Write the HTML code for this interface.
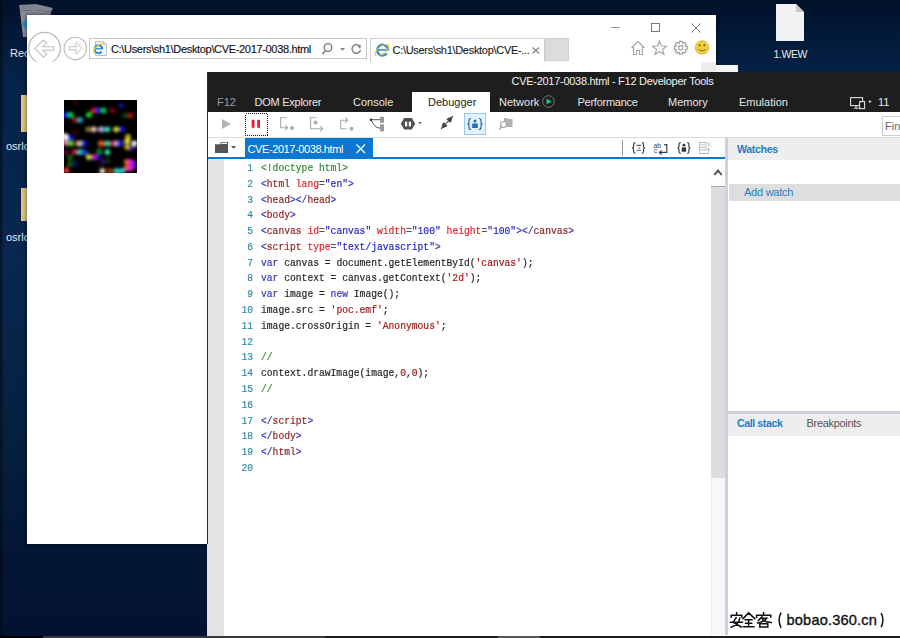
<!DOCTYPE html>
<html><head><meta charset="utf-8">
<style>
*{margin:0;padding:0;box-sizing:border-box}
html,body{width:900px;height:638px;overflow:hidden}
body{position:relative;background:#04163a;font-family:"Liberation Sans",sans-serif;font-size:11px;color:#000}
.a{position:absolute}
.t{position:absolute;white-space:nowrap;line-height:1}
#desk{left:0;top:0;width:900px;height:638px;background:linear-gradient(90deg,rgba(0,0,0,0.5) 0px,rgba(0,0,0,0) 4px),linear-gradient(180deg,#01112a 0px,#052247 72px,#092750 260px,#06213f 430px,#031634 560px,#021331 638px)}
.code{position:absolute;font-family:"Liberation Mono",monospace;font-size:10.6px;line-height:15.78px;white-space:pre;color:#262626;transform:scaleX(0.912);transform-origin:0 0;-webkit-text-stroke:0.2px currentColor}
.ln{position:absolute;font-family:"Liberation Mono",monospace;font-size:10.6px;line-height:15.78px;white-space:pre;color:#3089a8;text-align:right;width:44px;transform:scaleX(0.912);transform-origin:100% 0;-webkit-text-stroke:0.2px currentColor}
.tg{color:#3434b4}.tn{color:#8a1c1c}.at{color:#e0222c}.av{color:#2424c4}.kw{color:#3434c0}.st{color:#a31818}.cm{color:#2e8b2e}.dt{color:#2e8b2e}.eq{color:#555}
.tab{position:absolute;top:92px;height:20px;color:#e6e6e6;font-size:11px;line-height:20px;white-space:nowrap}
</style></head><body>
<div id="desk" class="a"></div>

<!-- desktop icons -->
<svg class="a" style="left:14px;top:3px" width="42" height="36" viewBox="0 0 42 36">
<path d="M5 2 L22 1 L39 5 L37 9 L21 7 L6 8 Z" fill="#80868f"/>
<path d="M6 8 L21 7 L37 9 L34 34 L9 34 Z" fill="#9ea3ad" opacity="0.85"/>
<circle cx="13.5" cy="21" r="4.6" fill="#2a8ad6"/>
</svg>
<div class="t" style="left:10px;top:48px;color:#e8e8e8;font-size:11px">Recy</div>
<div class="a" style="left:21px;top:95px;width:10px;height:37px;background:#e0c97e"></div>
<div class="t" style="left:6px;top:141px;color:#e8e8e8;font-size:11px">osrlc</div>
<div class="a" style="left:21px;top:188px;width:10px;height:33px;background:#e0c97e"></div>
<div class="t" style="left:6px;top:232px;color:#e8e8e8;font-size:11px">osrlc</div>
<svg class="a" style="left:776px;top:4px" width="28" height="38" viewBox="0 0 28 38">
<path d="M0 0 H20 L28 8 V37 H0 Z" fill="#f2f2f4"/>
<path d="M20 0 V8 H28 Z" fill="#c8c8cc"/>
</svg>
<div class="t" style="left:773.5px;top:48.5px;color:#e8e8e8;font-size:10.5px;letter-spacing:-0.4px">1.WEW</div>

<!-- browser window -->
<div class="a" style="left:27px;top:15px;width:689px;height:529px;background:#fff;box-shadow:0 0 4px 1px rgba(0,0,0,0.45)"></div>
<!-- back / forward -->
<svg class="a" style="left:27px;top:30px" width="62" height="34" viewBox="27 30 62 34">
<circle cx="44.55" cy="48.15" r="15.8" fill="none" stroke="#b8b8b8" stroke-width="1.2"/>
<rect x="27" y="61.6" width="40" height="3" fill="#fff"/>
<path d="M34.8 48.4 L43.6 40.1 L46.8 43.3 L42.9 46.7 H53.6 V50.3 H42.9 L46.8 53.8 L43.6 57.1 Z" fill="none" stroke="#c0c0c0" stroke-width="1.1" stroke-linejoin="miter"/>
<circle cx="75.3" cy="48.4" r="11.2" fill="none" stroke="#b8b8b8" stroke-width="1.1"/>
<path d="M82 48.3 L76.4 42.6 L74.8 44.3 L77 46.7 H69.2 V49.8 H77 L74.8 52.3 L76.4 54.1 Z" fill="none" stroke="#c0c0c0" stroke-width="1"/>
</svg>
<!-- address bar -->
<div class="a" style="left:89px;top:38px;width:278px;height:21px;border:1px solid #c8c8c8;background:#fff"></div>
<svg class="a" style="left:90px;top:39px" width="20" height="19" viewBox="90 39 20 19">
<path d="M95.5 41.5 H103.5 L106.5 44.5 V55.5 H95.5 Z" fill="#f6f6f6" stroke="#b8b8b8" stroke-width="0.9"/>
<path d="M103.5 41.5 V44.5 H106.5" fill="#ddd" stroke="#b8b8b8" stroke-width="0.7"/>
<path d="M102.4 49.3 A3.9 3.9 0 1 0 101.6 51.6" fill="none" stroke="#2a86d0" stroke-width="1.9"/>
<path d="M95 48.8 H102.6" stroke="#2a86d0" stroke-width="1.3"/>
<path d="M93.6 53.5 Q93.5 46 103 43.3" fill="none" stroke="#e8c830" stroke-width="1.2"/>
</svg>
<div class="t" style="left:111px;top:44px;font-size:11px;color:#111;letter-spacing:-0.33px;-webkit-text-stroke:0.15px #111">C:\Users\sh1\Desktop\CVE-2017-0038.html</div>
<svg class="a" style="left:320px;top:42px" width="45" height="14" viewBox="0 0 45 14">
<circle cx="8" cy="5.5" r="3.8" fill="none" stroke="#777" stroke-width="1.3"/>
<path d="M5.5 8.5 L2.5 12" stroke="#777" stroke-width="1.5"/>
<path d="M20 6 L25 6 L22.5 9 Z" fill="#888"/>
<path d="M39.5 4 A4.3 4.3 0 1 0 40.5 8" fill="none" stroke="#777" stroke-width="1.3"/>
<path d="M37 2.5 L41 3.5 L40 7 Z" fill="#777"/>
</svg>
<!-- tab -->
<div class="a" style="left:370px;top:38px;width:175px;height:24px;border:1px solid #d0d0d0;border-bottom:none;background:#fff"></div>
<svg class="a" style="left:373px;top:41px" width="18" height="18" viewBox="373 41 18 18">
<path d="M388 50.6 A5.4 5.4 0 1 0 386.8 53.6" fill="none" stroke="#2f8fd8" stroke-width="2.4"/>
<path d="M377.5 49.9 H388" stroke="#2f8fd8" stroke-width="1.6"/>
<ellipse cx="382" cy="50" rx="8.2" ry="3.6" transform="rotate(-38 382 50)" fill="none" stroke="#f0c830" stroke-width="1.1" stroke-dasharray="14 4 30 2"/>
</svg>
<div class="t" style="left:392.5px;top:45px;font-size:11px;color:#1a1a1a;letter-spacing:-0.3px;-webkit-text-stroke:0.12px #1a1a1a">C:\Users\sh1\Desktop\CVE-...</div>
<svg class="a" style="left:532px;top:47px" width="8" height="7" viewBox="0 0 8 7"><path d="M0.5 0.5 L7 6.5 M7 0.5 L0.5 6.5" stroke="#888" stroke-width="1.3"/></svg>
<div class="a" style="left:545px;top:38px;width:24px;height:23px;background:#dcdcdc;border:1px solid #cfcfcf"></div>
<!-- title buttons -->
<div class="a" style="left:611px;top:27px;width:9px;height:1px;background:#999"></div>
<div class="a" style="left:651px;top:23px;width:9px;height:9px;border:1px solid #777"></div>
<svg class="a" style="left:691px;top:23px" width="10" height="10" viewBox="0 0 10 10"><path d="M0.5 0.5 L9.5 9.5 M9.5 0.5 L0.5 9.5" stroke="#777" stroke-width="1"/></svg>
<!-- home star gear smiley -->
<svg class="a" style="left:630px;top:40px" width="82" height="16" viewBox="630 40 82 16">
<path d="M631.5 48 L638 41.5 L644.5 48 M633.5 46.5 V54.5 H636.5 V50.5 H639.5 V54.5 H642.5 V46.5" fill="none" stroke="#a4a4a4" stroke-width="1.1"/>
<path d="M659.5 41 L661.3 46 L666.5 46.3 L662.5 49.5 L664 54.5 L659.5 51.5 L655 54.5 L656.5 49.5 L652.5 46.3 L657.7 46 Z" fill="none" stroke="#a4a4a4" stroke-width="1.1"/>
<path d="M685.49 46.38 L687.25 46.39 L687.25 49.21 L685.49 49.22 L685.12 50.11 L686.36 51.36 L684.36 53.36 L683.11 52.12 L682.22 52.49 L682.21 54.25 L679.39 54.25 L679.38 52.49 L678.49 52.12 L677.24 53.36 L675.24 51.36 L676.48 50.11 L676.11 49.22 L674.35 49.21 L674.35 46.39 L676.11 46.38 L676.48 45.49 L675.24 44.24 L677.24 42.24 L678.49 43.48 L679.38 43.11 L679.39 41.35 L682.21 41.35 L682.22 43.11 L683.11 43.48 L684.36 42.24 L686.36 44.24 L685.12 45.49 Z" fill="none" stroke="#999" stroke-width="1.05" stroke-linejoin="round"/>
<circle cx="680.8" cy="47.8" r="2.2" fill="none" stroke="#999" stroke-width="1.05"/>
<circle cx="702" cy="47.5" r="6.8" fill="#f2cf3a" stroke="#c8a020" stroke-width="0.6"/>
<circle cx="699.6" cy="45.3" r="1" fill="#5a4a08"/><circle cx="704.4" cy="45.3" r="1" fill="#5a4a08"/>
<path d="M698.5 49.5 Q702 52.5 705.5 49.5" fill="none" stroke="#6a5a10" stroke-width="0.9"/>
</svg>
<div class="a" style="left:701px;top:62px;width:15px;height:10px;background:#ececec"></div>
<div class="a" style="left:716px;top:65px;width:22px;height:7px;background:#f4f4f4"></div>

<!-- canvas image -->
<svg class="a" style="left:64px;top:100px" width="73" height="73" viewBox="64 100 73 73"><defs><filter id="bl" x="-50%" y="-50%" width="200%" height="200%"><feGaussianBlur stdDeviation="1.4"/></filter></defs><rect x="64" y="100" width="73" height="73" fill="#000"/><g filter="url(#bl)"><circle cx="65.8" cy="114.9" r="2.9" fill="#1020ff" opacity="1.00"/><circle cx="70.8" cy="114.9" r="2.9" fill="#10d020" opacity="1.00"/><circle cx="75.0" cy="119.9" r="2.9" fill="#a01010" opacity="0.80"/><circle cx="80.0" cy="119.9" r="2.9" fill="#20a0c0" opacity="1.00"/><circle cx="88.9" cy="114.9" r="2.9" fill="#10d020" opacity="1.00"/><circle cx="93.9" cy="110.5" r="2.9" fill="#d01020" opacity="1.00"/><circle cx="98.3" cy="110.5" r="2.9" fill="#1020e0" opacity="1.00"/><circle cx="75.0" cy="102.0" r="2.9" fill="#500808" opacity="0.60"/><circle cx="88.3" cy="129.3" r="2.9" fill="#a09020" opacity="0.80"/><circle cx="93.9" cy="129.3" r="2.9" fill="#f0c0b0" opacity="1.00"/><circle cx="100.8" cy="129.3" r="2.9" fill="#b0a0e0" opacity="1.00"/><circle cx="75.5" cy="132.5" r="2.9" fill="#500808" opacity="0.60"/><circle cx="65.0" cy="136.0" r="2.9" fill="#e0e0ff" opacity="1.00"/><circle cx="103.6" cy="110.5" r="2.9" fill="#10c030" opacity="1.00"/><circle cx="112.4" cy="110.5" r="2.9" fill="#900010" opacity="0.80"/><circle cx="121.1" cy="105.5" r="2.9" fill="#101090" opacity="0.80"/><circle cx="124.9" cy="115.5" r="2.9" fill="#106010" opacity="0.60"/><circle cx="130.5" cy="115.5" r="2.9" fill="#c01010" opacity="0.90"/><circle cx="101.8" cy="129.3" r="2.9" fill="#a0a0e0" opacity="1.00"/><circle cx="107.4" cy="129.3" r="2.9" fill="#20e0b0" opacity="1.00"/><circle cx="116.1" cy="129.3" r="2.9" fill="#d0d020" opacity="1.00"/><circle cx="122.0" cy="129.3" r="2.9" fill="#1010e0" opacity="1.00"/><circle cx="128.0" cy="136.8" r="2.9" fill="#d0c020" opacity="0.90"/><circle cx="65.8" cy="137.8" r="2.9" fill="#ffffff" opacity="1.00"/><circle cx="70.8" cy="137.8" r="2.9" fill="#1010e0" opacity="1.00"/><circle cx="65.8" cy="142.8" r="2.9" fill="#e080a0" opacity="1.00"/><circle cx="70.8" cy="143.4" r="2.9" fill="#40d020" opacity="1.00"/><circle cx="76.4" cy="143.4" r="2.9" fill="#a03010" opacity="0.80"/><circle cx="80.0" cy="143.4" r="2.9" fill="#e0e0c0" opacity="0.90"/><circle cx="84.5" cy="143.4" r="2.9" fill="#1010e0" opacity="1.00"/><circle cx="100.8" cy="143.4" r="2.9" fill="#e06010" opacity="0.90"/><circle cx="66.4" cy="152.1" r="2.9" fill="#800040" opacity="0.70"/><circle cx="74.5" cy="152.1" r="2.9" fill="#c01040" opacity="1.00"/><circle cx="80.0" cy="152.1" r="2.9" fill="#20d0d0" opacity="1.00"/><circle cx="84.5" cy="152.1" r="2.9" fill="#1040e0" opacity="1.00"/><circle cx="88.9" cy="157.1" r="2.9" fill="#d0e020" opacity="1.00"/><circle cx="94.5" cy="157.1" r="2.9" fill="#e010e0" opacity="1.00"/><circle cx="99.5" cy="151.5" r="2.9" fill="#108020" opacity="0.70"/><circle cx="70.0" cy="158.0" r="2.9" fill="#108010" opacity="0.70"/><circle cx="70.0" cy="164.0" r="2.9" fill="#108010" opacity="0.70"/><circle cx="66.4" cy="170.3" r="2.9" fill="#f03030" opacity="1.00"/><circle cx="75.8" cy="164.0" r="2.9" fill="#101080" opacity="0.60"/><circle cx="101.8" cy="143.4" r="2.9" fill="#e05020" opacity="1.00"/><circle cx="107.4" cy="143.4" r="2.9" fill="#20d0a0" opacity="1.00"/><circle cx="113.0" cy="143.4" r="2.9" fill="#c01020" opacity="1.00"/><circle cx="116.8" cy="143.4" r="2.9" fill="#c0a0e0" opacity="1.00"/><circle cx="120.5" cy="143.4" r="2.9" fill="#1010e0" opacity="1.00"/><circle cx="127.4" cy="141.0" r="2.9" fill="#f0e020" opacity="1.20"/><circle cx="127.4" cy="147.0" r="2.9" fill="#d0b010" opacity="1.00"/><circle cx="134.3" cy="143.4" r="2.9" fill="#f0f0ff" opacity="1.00"/><circle cx="131.8" cy="148.4" r="2.9" fill="#3010a0" opacity="0.90"/><circle cx="99.2" cy="151.5" r="2.9" fill="#108020" opacity="0.70"/><circle cx="107.4" cy="152.1" r="2.9" fill="#20e0a0" opacity="1.00"/><circle cx="98.6" cy="157.0" r="2.9" fill="#1010c0" opacity="0.80"/><circle cx="101.8" cy="162.0" r="2.9" fill="#400080" opacity="0.70"/><circle cx="107.4" cy="160.9" r="2.9" fill="#105010" opacity="0.60"/><circle cx="126.8" cy="162.0" r="2.9" fill="#e06020" opacity="1.00"/><circle cx="126.8" cy="168.0" r="2.9" fill="#e06020" opacity="1.00"/><circle cx="131.0" cy="162.0" r="2.9" fill="#f010e0" opacity="1.00"/><circle cx="131.0" cy="168.0" r="2.9" fill="#f010e0" opacity="1.00"/><circle cx="135.0" cy="165.0" r="2.9" fill="#2020e0" opacity="0.90"/><circle cx="102.4" cy="170.9" r="2.9" fill="#f0d0b0" opacity="1.00"/><circle cx="116.8" cy="170.9" r="2.9" fill="#20e0c0" opacity="1.00"/><circle cx="110.0" cy="171.0" r="2.9" fill="#d04010" opacity="0.80"/><circle cx="122.0" cy="171.0" r="2.9" fill="#30d0f0" opacity="0.90"/></g></svg>

<!-- DEVTOOLS -->
<div class="a" style="left:207px;top:72px;width:693px;height:564px;background:#fff"></div>
<div class="a" style="left:207px;top:72px;width:693px;height:40px;background:#1e1e1e"></div>
<div class="t" style="left:511.5px;top:76px;color:#f0f0f0;font-size:11px;letter-spacing:-0.28px">CVE-2017-0038.html - F12 Developer Tools</div>
<div class="tab" style="left:217px;color:#9a9a9a">F12</div>
<div class="tab" style="left:254.5px;letter-spacing:-0.25px">DOM Explorer</div>
<div class="tab" style="left:353px">Console</div>
<div class="a" style="left:412px;top:92px;width:78px;height:20px;background:#fff"></div>
<div class="tab" style="left:428px;color:#222">Debugger</div>
<div class="tab" style="left:499px">Network</div>
<svg class="a" style="left:542px;top:95px" width="13" height="13" viewBox="0 0 13 13"><circle cx="6.5" cy="6.5" r="5.8" fill="none" stroke="#777" stroke-width="1"/><path d="M4.5 3.5 L9.5 6.5 L4.5 9.5 Z" fill="#1ec080"/></svg>
<div class="tab" style="left:577.5px;letter-spacing:-0.25px">Performance</div>
<div class="tab" style="left:668px">Memory</div>
<div class="tab" style="left:739px">Emulation</div>
<svg class="a" style="left:848px;top:95px" width="28" height="16" viewBox="848 95 28 16">
<rect x="850.6" y="97.6" width="12" height="8" fill="none" stroke="#e0e0e0" stroke-width="1.1"/>
<path d="M856 105.6 V107.8 M853.8 108.2 H858.6" stroke="#e0e0e0" stroke-width="1.1"/>
<rect x="859.6" y="101.6" width="5" height="7" fill="#1e1e1e" stroke="#e0e0e0" stroke-width="1.1"/>
<path d="M868.2 100.8 H871.6 L869.9 103.2 Z" fill="#e0e0e0"/>
</svg>
<div class="t" style="left:878px;top:97px;color:#e6e6e6;font-size:11px">11</div>

<!-- toolbar -->
<div class="a" style="left:207px;top:137px;width:693px;height:1px;background:#dcdcdc"></div>
<div class="a" style="left:882px;top:116px;width:20px;height:20px;border:1px solid #ccc;background:#fff"></div>
<div class="t" style="left:885px;top:121px;color:#666;font-size:11px">Fin</div>

<!-- toolbar icons -->
<svg class="a" style="left:207px;top:112px" width="320" height="25" viewBox="207 112 320 25">
<path d="M222 119 L231 124 L222 129 Z" fill="#b4b4b4"/>
<rect x="245.5" y="113.5" width="22" height="22" fill="none" stroke="#111" stroke-width="1" stroke-dasharray="1 1" shape-rendering="crispEdges"/>
<rect x="251.7" y="119.8" width="2.8" height="8" fill="#dc2032"/>
<rect x="257.2" y="119.8" width="2.8" height="8" fill="#dc2032"/>
<g fill="none" stroke="#ababab" stroke-width="1.1">
<path d="M286.5 117.7 H280.6 V127.7 H287.5 M285 125.2 L287.8 127.7 L285 130.2"/>
<path d="M316.5 117.7 H310.6 V128.7 H322.5 M320 126.2 L322.8 128.7 L320 131.2"/>
<path d="M340.6 121 V128.7 H346.5 M340.6 121 V120.2 H347.5 M345 117.7 L347.8 120.2 L345 122.7"/>
</g>
<g fill="#ababab"><circle cx="292" cy="128" r="2"/><circle cx="315.5" cy="122.5" r="2"/><circle cx="351.5" cy="128.7" r="2"/></g>
<path d="M370.9 119.7 H380.5 M370.9 119.7 Q375 127.8 379 128 H380.5" fill="none" stroke="#555" stroke-width="1"/>
<circle cx="370.9" cy="119.7" r="1.2" fill="#333"/>
<rect x="380.5" y="117.1" width="3.2" height="5.6" fill="#9a9a9a" stroke="#777" stroke-width="0.5"/>
<rect x="380.5" y="124.8" width="3.2" height="6.2" fill="#9a9a9a" stroke="#777" stroke-width="0.5"/>
<path d="M404.2 117.9 H411.8 L415.2 123.75 L411.8 129.6 H404.2 L400.8 123.75 Z" fill="#505050"/>
<rect x="405" y="121.6" width="2.2" height="4.8" fill="#fff"/><rect x="408.8" y="121.6" width="2.2" height="4.8" fill="#fff"/>
<path d="M418.4 122.1 H421.6 L420 124.3 Z" fill="#555"/>
<path d="M441 129 L453 116" stroke="#444" stroke-width="1.1"/><path d="M441.3 128.6 L442.6 123.6 L443.9 122.2 L447.4 125.7 L446 127 Z" fill="#444"/>
<path d="M452.6 116.4 L451.3 121.4 L450 122.8 L446.5 119.3 L447.9 118 Z" fill="#444"/>
<rect x="464.5" y="113.5" width="21" height="21" fill="#e5f1fb" stroke="#99c9ef" stroke-width="1"/>
<path d="M471 118.5 Q469 118.5 469 120.5 V123 L468 124 L469 125 V127.5 Q469 129.5 471 129.5 M479 118.5 Q481 118.5 481 120.5 V123 L482 124 L481 125 V127.5 Q481 129.5 479 129.5" fill="none" stroke="#1f5f9f" stroke-width="1.1"/>
<circle cx="475" cy="121" r="1.6" fill="#1f6fbf"/><rect x="472.2" y="123.5" width="5.6" height="4.5" fill="#1f6fbf"/>
<path d="M504 118 H507 L508 119 H512.5 V127 H504 Z" fill="#b0b0b0"/>
<circle cx="503.5" cy="124.5" r="3" fill="#fff" stroke="#a8a8a8" stroke-width="1.2"/>
<path d="M501.5 126.5 L499.5 129.5" stroke="#a8a8a8" stroke-width="1.4"/>
</svg>
<!-- tab bar icons -->
<svg class="a" style="left:212px;top:140px" width="26" height="15" viewBox="212 140 26 15">
<path d="M215 144.2 H220.6 V142 H228 V153 H215 Z" fill="#555"/>
<rect x="221.5" y="142.7" width="5.5" height="1.3" fill="#fff"/>
<path d="M231 146 H236 L233.5 148.8 Z" fill="#555"/>
</svg>
<svg class="a" style="left:630px;top:140px" width="84" height="16" viewBox="630 140 84 16">
<g fill="none" stroke="#3a3a3a" stroke-width="1.15">
<path d="M635.3 142.6 Q633.6 142.6 633.6 144.4 V146.9 L632.6 148 L633.6 149.1 V151.6 Q633.6 153.4 635.3 153.4 M641.8 142.6 Q643.5 142.6 643.5 144.4 V146.9 L644.5 148 L643.5 149.1 V151.6 Q643.5 153.4 641.8 153.4"/>
<path d="M680.7 142.6 Q679 142.6 679 144.4 V146.9 L678 148 L679 149.1 V151.6 Q679 153.4 680.7 153.4 M687.2 142.6 Q688.9 142.6 688.9 144.4 V146.9 L689.9 148 L688.9 149.1 V151.6 Q688.9 153.4 687.2 153.4"/>
<path d="M664.2 144.6 H666.8 V152.4 H659.5 M661.6 150.3 L659.4 152.4 L661.6 154.5"/>
</g>
<path d="M636.4 145.3 H641" stroke="#3a3a3a" stroke-width="1"/>
<path d="M638.4 148.2 H640.2" stroke="#555" stroke-width="0.9"/>
<path d="M636.4 150.4 H641" stroke="#8a8a8a" stroke-width="1.4"/>
<text x="653.6" y="147.6" font-family="Liberation Sans" font-size="6.8" fill="#444">ab</text>
<text x="653.8" y="153.2" font-family="Liberation Sans" font-size="6.8" fill="#555">c</text>
<circle cx="683.9" cy="145.2" r="1.4" fill="#333"/><rect x="681.7" y="147.4" width="4.4" height="4.3" fill="#333"/>
<g fill="none" stroke="#bdbdbd" stroke-width="1"><rect x="699.5" y="142.5" width="6.5" height="7.5"/><path d="M700.5 145 H705 M700.5 147.5 H705 M699.5 150 V153.5 H708.5 V148.5 M706.3 150.5 L708.5 148.3 L710.7 150.5 M707 142.6 L711 146.6 M711 142.6 L708 145.6"/></g>
</svg>
<!-- left pane tab bar -->
<div class="a" style="left:245px;top:138px;width:128px;height:19px;background:#0a78d2"></div>
<div class="t" style="left:247.5px;top:143.5px;color:#fff;font-size:11px;letter-spacing:-0.4px">CVE-2017-0038.html</div>
<svg class="a" style="left:356px;top:144px" width="10" height="10" viewBox="0 0 10 10"><path d="M0.5 0.5 L9 9 M9 0.5 L0.5 9" stroke="#fff" stroke-width="1.2"/></svg>
<div class="a" style="left:207px;top:157px;width:519px;height:2px;background:#0a78d2"></div>
<div class="a" style="left:622px;top:140px;width:1px;height:16px;background:#999"></div>

<!-- code area -->
<div class="a" style="left:207px;top:159px;width:17px;height:477px;background:#e4e4e7"></div>
<div class="a" style="left:207px;top:72px;width:1px;height:472px;background:#2a2a2a"></div>
<div class="ln" style="left:209px;top:161px">1
2
3
4
5
6
7
8
9
10
11
12
13
14
15
16
17
18
19
20</div>
<div class="code" style="left:261px;top:161px"><span class="dt">&lt;!doctype html&gt;</span>
<span class="tg">&lt;</span><span class="tn">html</span> <span class="at">lang</span><span class="eq">=</span><span class="av">"en"</span><span class="tg">&gt;</span>
<span class="tg">&lt;</span><span class="tn">head</span><span class="tg">&gt;&lt;/</span><span class="tn">head</span><span class="tg">&gt;</span>
<span class="tg">&lt;</span><span class="tn">body</span><span class="tg">&gt;</span>
<span class="tg">&lt;</span><span class="tn">canvas</span> <span class="at">id</span><span class="eq">=</span><span class="av">"canvas"</span> <span class="at">width</span><span class="eq">=</span><span class="av">"100"</span> <span class="at">height</span><span class="eq">=</span><span class="av">"100"</span><span class="tg">&gt;&lt;/</span><span class="tn">canvas</span><span class="tg">&gt;</span>
<span class="tg">&lt;</span><span class="tn">script</span> <span class="at">type</span><span class="eq">=</span><span class="av">"text/javascript"</span><span class="tg">&gt;</span>
<span class="kw">var</span> canvas = document.getElementById(<span class="st">'canvas'</span>);
<span class="kw">var</span> context = canvas.getContext(<span class="st">'2d'</span>);
<span class="kw">var</span> image = <span class="kw">new</span> Image();
image.src = <span class="st">'poc.emf'</span>;
image.crossOrigin = <span class="st">'Anonymous'</span>;

<span class="cm">//</span>
context.drawImage(image,<span class="st">0</span>,<span class="st">0</span>);
<span class="cm">//</span>

<span class="tg">&lt;/</span><span class="tn">script</span><span class="tg">&gt;</span>
<span class="tg">&lt;/</span><span class="tn">body</span><span class="tg">&gt;</span>
<span class="tg">&lt;/</span><span class="tn">html</span><span class="tg">&gt;</span>
</div>

<!-- scrollbar -->
<div class="a" style="left:711px;top:159px;width:14px;height:476px;background:#f8f8fb;border-left:1px solid #f0f0f4"></div>
<div class="a" style="left:711px;top:159px;width:14px;height:27px;background:#fdfdfd"></div>
<svg class="a" style="left:712px;top:167px" width="12" height="10" viewBox="712 167 12 10"><path d="M714.3 175 L718 170.6 L721.7 175" fill="none" stroke="#505050" stroke-width="1.9"/></svg>
<div class="a" style="left:711px;top:186px;width:14px;height:292px;background:#dbdbe0;border-top:1px solid #a8a8b0"></div>

<!-- divider -->
<div class="a" style="left:725px;top:138px;width:3px;height:497px;background:#cfcfdd"></div>

<!-- right panel -->
<div class="a" style="left:728px;top:138px;width:172px;height:22px;background:#eeeeee"></div>
<div class="t" style="left:737px;top:144px;color:#1e7cc8;font-size:10.6px;font-weight:bold;letter-spacing:-0.35px">Watches</div>
<div class="a" style="left:729px;top:184px;width:171px;height:17px;background:#dedede"></div>
<div class="t" style="left:744px;top:187px;color:#2a7cc4;font-size:11px;letter-spacing:-0.25px">Add watch</div>
<div class="a" style="left:728px;top:411px;width:172px;height:3px;background:#cfcfdd"></div>
<div class="a" style="left:728px;top:414px;width:172px;height:22px;background:#eeeeee"></div>
<div class="t" style="left:737px;top:418px;color:#1e7cc8;font-size:10.6px;font-weight:bold;letter-spacing:-0.4px">Call stack</div>
<div class="t" style="left:806.5px;top:418px;color:#555;font-size:11px;letter-spacing:-0.3px">Breakpoints</div>

<!-- watermark -->
<svg class="a" style="left:728px;top:610px" width="60" height="20" viewBox="728 610 60 20">
<g fill="none" stroke="#111" stroke-width="1.5" stroke-linecap="square">
<path d="M736.6 612.8 V614.2 M731.2 617.2 V615.3 H741.8 V617"/>
<path d="M736.2 617.6 L733.2 622.2 Q737 624.5 741.2 627 M739.8 618.2 Q738.6 624.8 731.2 627.2 M730.4 622.2 H742.4"/>
<path d="M748.6 612.9 L743 618.6 M748.6 612.9 L754.8 618.6 M745.2 619.8 H752 M745.6 623.2 H751.6 M743.4 626.8 H754 M748.6 619.8 V626.8"/>
<path d="M763.6 612.8 V614.2 M756.6 617.2 V615.3 H770.8 V617"/>
<path d="M762 616.8 L758.4 620.4 M760.8 618.2 H766.8 Q764.5 621.5 757.6 623 M762.6 619.8 Q765.5 622 771.2 622.6"/>
<path d="M759.8 623.8 H767.8 V626.9 H759.8 Z"/>
<path d="M780.8 613.2 Q777.4 620 780.8 627.2"/>
</g>
</svg>
<div class="t" style="left:786.5px;top:612.5px;font-size:14.6px;color:#111;-webkit-text-stroke:0.35px #111;letter-spacing:0.18px">bobao.360.cn</div>
<svg class="a" style="left:878px;top:610px" width="10" height="20" viewBox="878 610 10 20"><path d="M881.2 613.2 Q884.6 620 881.2 627.2" fill="none" stroke="#111" stroke-width="1.5"/></svg>

<div class="a" style="left:0;top:636px;width:43px;height:2px;background:#000"></div>
<div class="a" style="left:43px;top:636px;width:282px;height:2px;background:#3a3a3a"></div>
<div class="a" style="left:325px;top:636px;width:575px;height:2px;background:#1e1e1e"></div>
<div class="a" style="left:498px;top:636px;width:42px;height:2px;background:#555"></div>
</body></html>
